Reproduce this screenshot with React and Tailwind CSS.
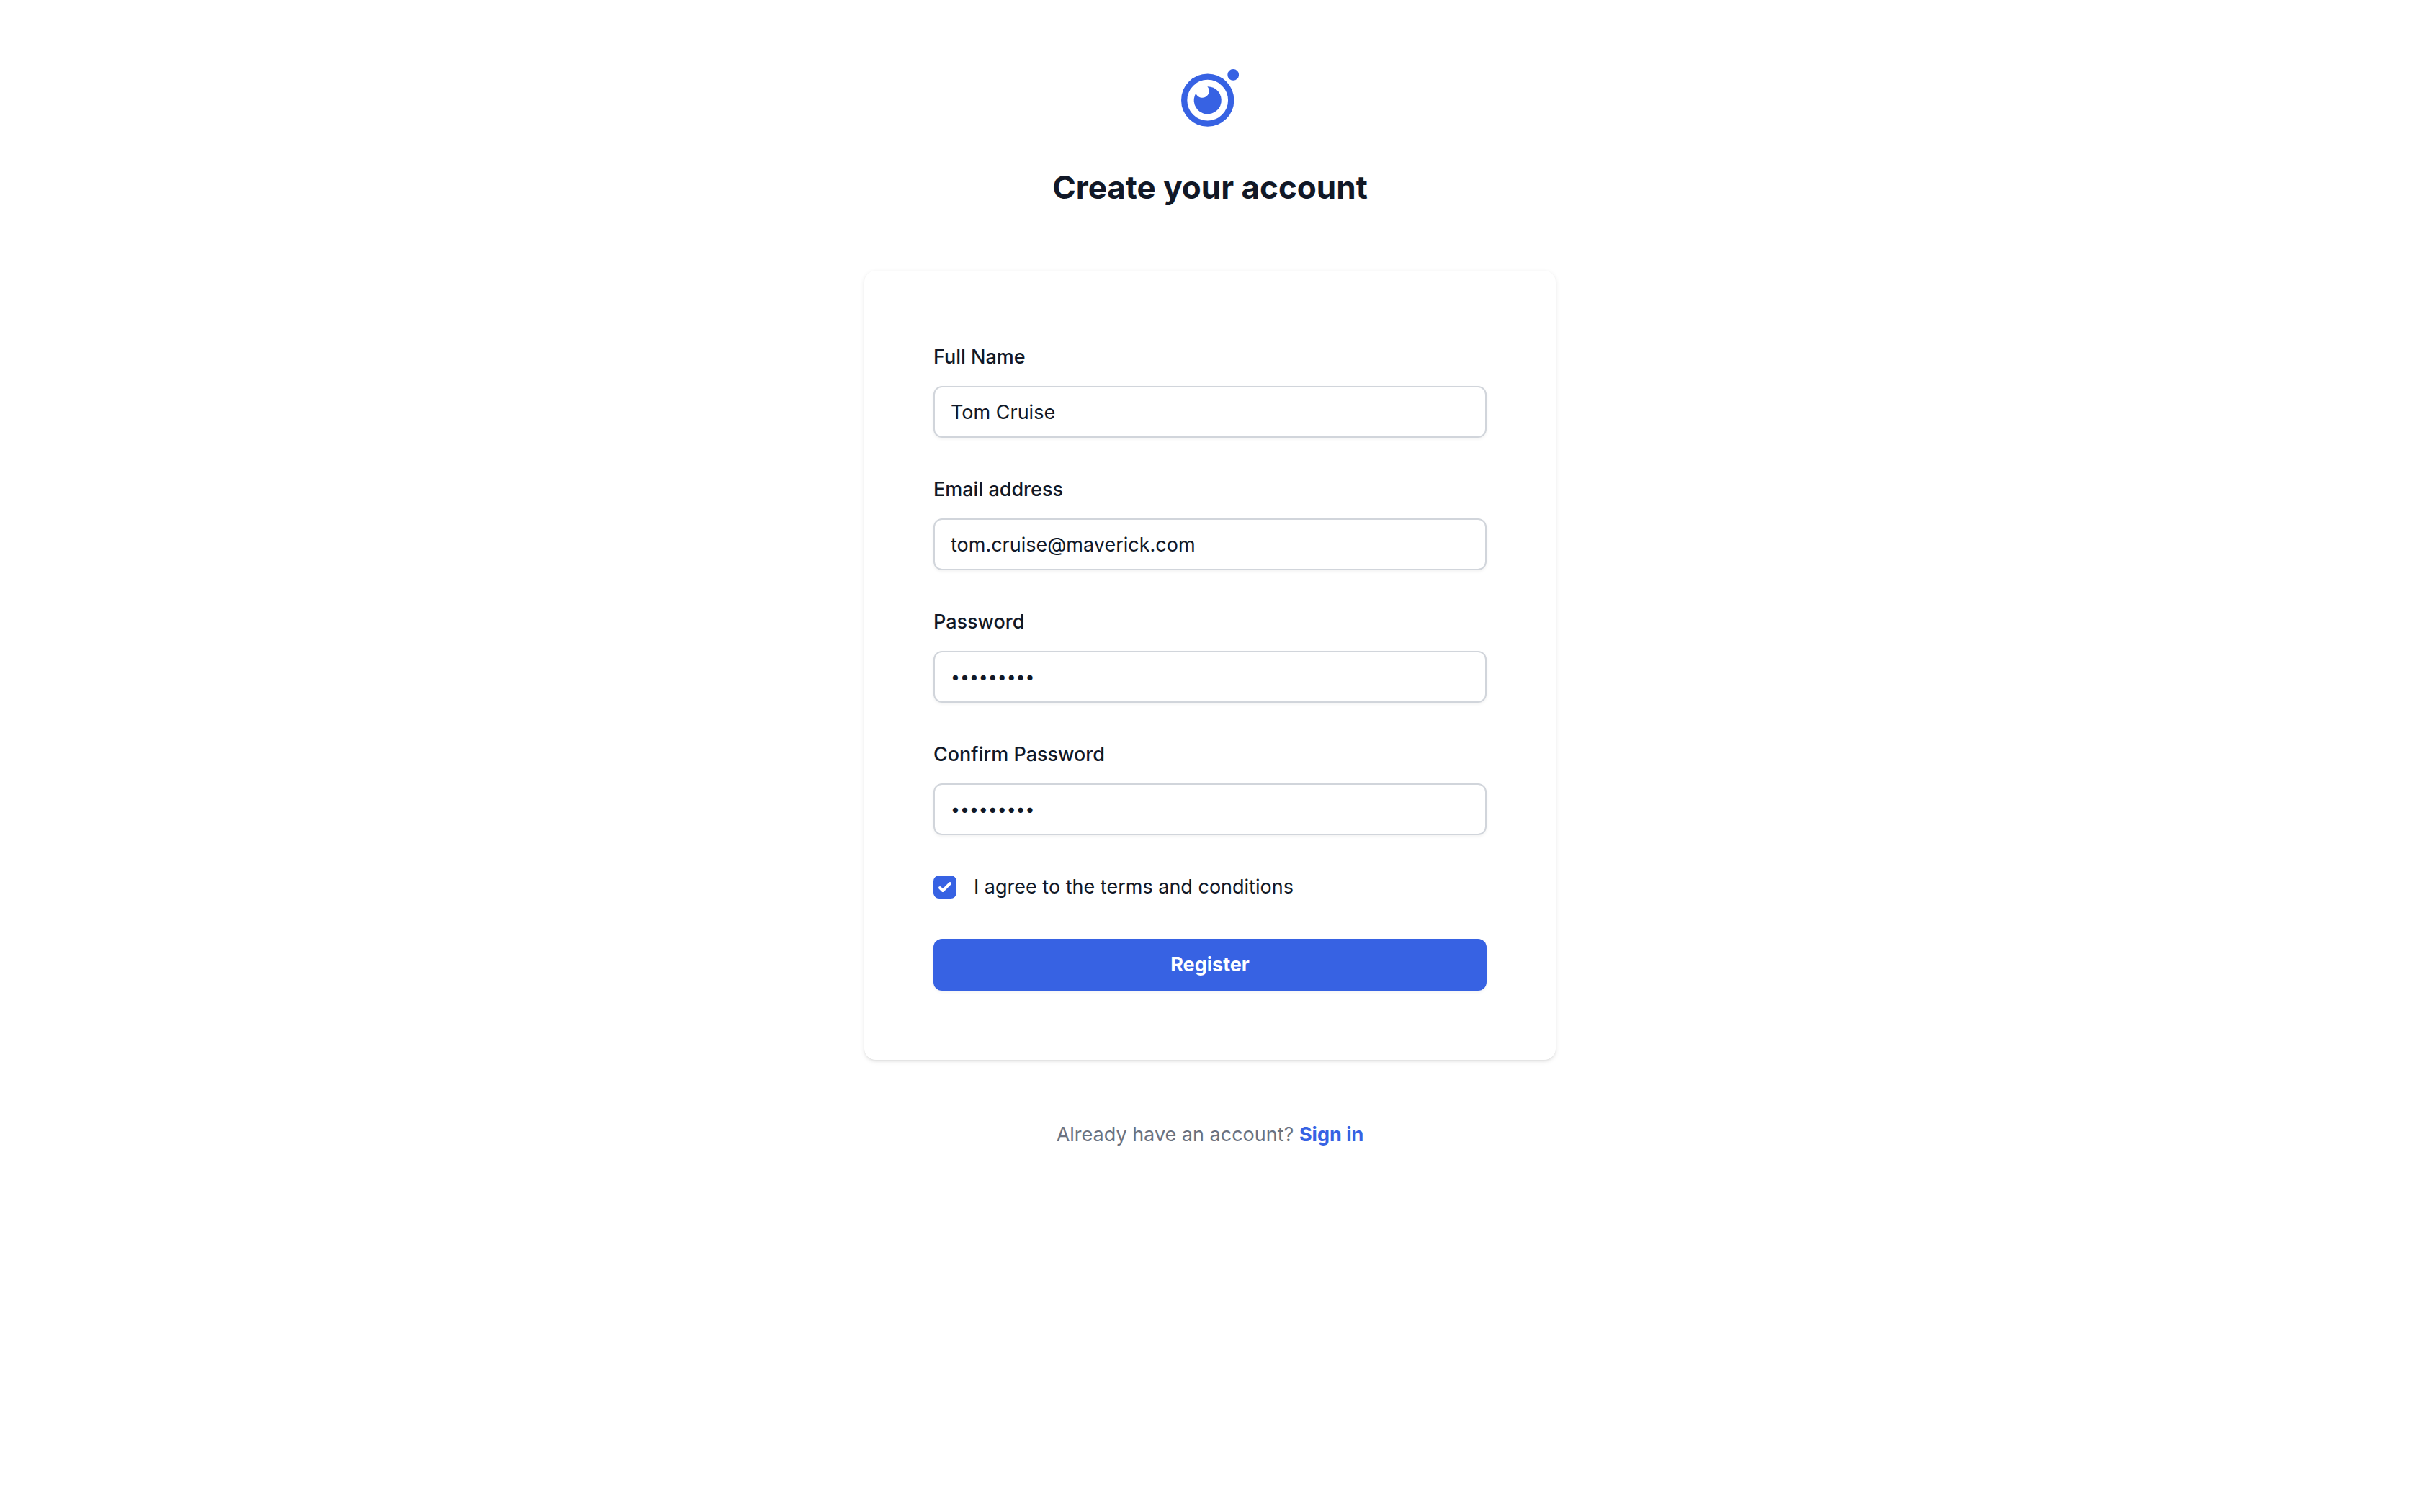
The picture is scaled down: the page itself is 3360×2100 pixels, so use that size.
const fields = [
  { id: "name", label: "Full Name", type: "text", value: "Tom Cruise" },
  { id: "email", label: "Email address", type: "email", value: "tom.cruise@maverick.com" },
  { id: "password", label: "Password", type: "password", value: "maverick1" },
  { id: "confirm", label: "Confirm Password", type: "password", value: "maverick1" },
];

function Logo() {
  return (
    <svg viewBox="0 0 80 80" className="mx-auto size-20 text-[#3762e3]" role="img" aria-label="Logo">
      <circle cx="36.7" cy="43.2" r="32.5" fill="none" stroke="currentColor" strokeWidth="8.3" />
      <circle cx="72.2" cy="7.9" r="7.9" fill="currentColor" />
      <path
        d="M36.4 24.2A19.1 19.1 0 1 1 20.4 33.4A9.4 9.4 0 1 0 36.4 24.2Z"
        fill="currentColor"
      />
    </svg>
  );
}

function Field({ id, label, type, value }) {
  return (
    <div className="flex flex-col gap-4">
      <label htmlFor={id} className="font-medium">
        {label}
      </label>
      <input
        id={id}
        type={type}
        defaultValue={value}
        className={
          "h-[72px] w-full rounded-xl border-2 border-[#d1d5db] bg-white px-[22px] shadow-[0_2px_4px_rgba(0,0,0,0.05)] outline-none focus:border-[#3762e3] " +
          (type === "password" ? "text-[23px]" : "text-[27px]")
        }
      />
    </div>
  );
}

export default function App() {
  return (
    <main className="min-h-screen bg-white px-6 py-24 font-['Inter',sans-serif] text-[27px] leading-[48px] text-[#111827]">
      <div className="mx-auto flex max-w-[960px] flex-col">
        <Logo />
        <h1 className="mt-12 text-center text-[44px] leading-[72px] font-bold">Create your account</h1>
        <form className="mt-20 flex flex-col gap-12 rounded-2xl bg-white p-24 shadow-[0_2px_6px_rgba(0,0,0,0.1),0_2px_4px_-2px_rgba(0,0,0,0.1)]">
          {fields.map((field) => (
            <Field key={field.id} {...field} />
          ))}
          <div className="flex items-center gap-6">
            <span className="grid size-8 shrink-0">
              <input
                id="terms"
                type="checkbox"
                defaultChecked
                className="peer col-start-1 row-start-1 size-8 appearance-none rounded-lg border-2 border-[#d1d5db] checked:border-[#3762e3] checked:bg-[#3762e3]"
              />
              <svg
                viewBox="0 0 16 16"
                className="pointer-events-none invisible col-start-1 row-start-1 size-8 fill-white peer-checked:visible"
                aria-hidden="true"
              >
                <path d="M12.207 4.793a1 1 0 010 1.414l-5 5a1 1 0 01-1.414 0l-2-2a1 1 0 011.414-1.414L6.5 9.086l4.293-4.293a1 1 0 011.414 0z" />
              </svg>
            </span>
            <label htmlFor="terms">I agree to the terms and conditions</label>
          </div>
          <button
            type="button"
            className="h-[72px] w-full rounded-xl bg-[#3762e3] font-bold text-white shadow-[0_2px_4px_rgba(0,0,0,0.05)]"
          >
            Register
          </button>
        </form>
        <p className="mt-20 text-center text-[#6b7280]">
          Already have an account?{" "}
          <a href="#signin" className="font-bold text-[#3762e3]">
            Sign in
          </a>
        </p>
      </div>
    </main>
  );
}
